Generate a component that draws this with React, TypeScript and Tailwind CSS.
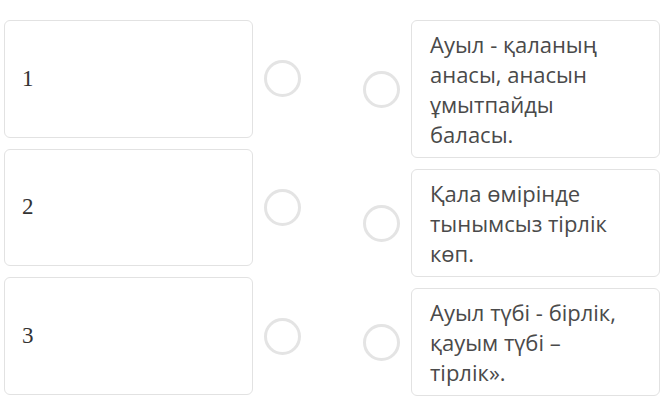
export default function App() {
  const left = ["1", "2", "3"];
  const right = [
    "Ауыл - қаланың анасы, анасын ұмытпайды баласы.",
    "Қала өмірінде тынымсыз тірлік көп.",
    "Ауыл түбі - бірлік, қауым түбі – тірлік».",
  ];
  return (
    <div className="w-[668px] h-[409px] bg-white flex items-stretch pt-[20px] pl-[4px] overflow-hidden">
      <div className="flex flex-col gap-[11px] w-[298px] h-[375px]">
        {left.map((n) => (
          <div key={n} className="flex-1 flex items-center">
            <div
              className="w-[249px] self-stretch flex items-center border border-[#e2e2e2] rounded-[6px] pl-[17px] text-[23px] text-[#333333]"
              style={{ fontFamily: '"Liberation Serif", "Times New Roman", serif' }}
            >
              {n}
            </div>
            <div className="ml-[11px] w-[37px] h-[37px] rounded-full border-[3px] border-[#e4e4e4] shrink-0" />
          </div>
        ))}
      </div>
      <div className="ml-[61px] flex flex-col gap-[11px] self-start">
        {right.map((t, i) => (
          <div key={i} className="flex items-center">
            <div className="w-[37px] h-[37px] rounded-full border-[3px] border-[#e4e4e4] shrink-0" />
            <div
              className="ml-[11px] w-[249px] border border-[#e2e2e2] rounded-[6px] pl-[18px] pr-[36px] py-[8px] text-[22px] leading-[30px] text-[#4a4a4a]"
              style={{ fontFamily: '"Open Sans", "Noto Sans", sans-serif' }}
            >
              {t}
            </div>
          </div>
        ))}
      </div>
    </div>
  );
}
